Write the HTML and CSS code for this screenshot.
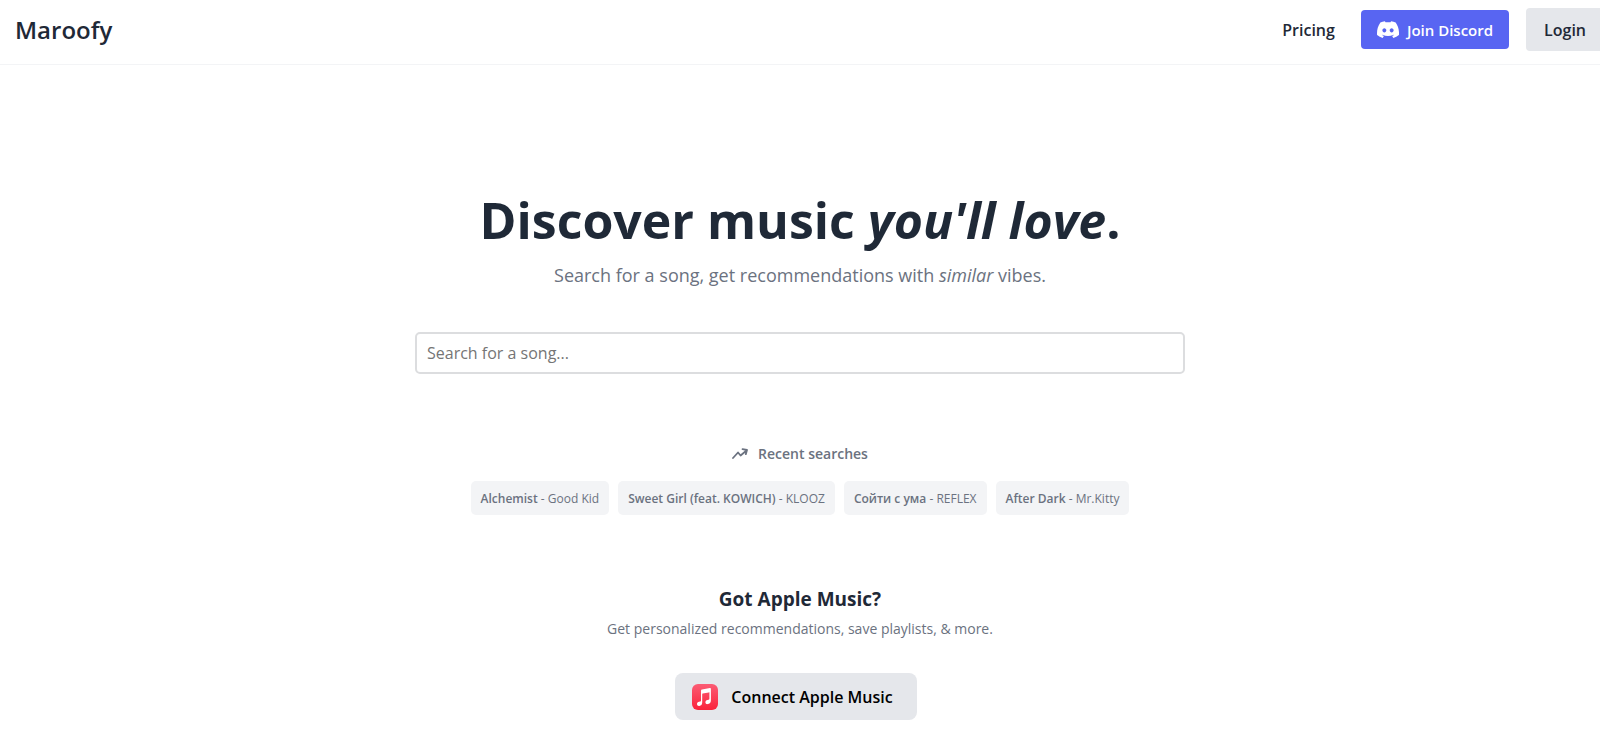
FILE: index.html
```html
<!DOCTYPE html>
<html lang="en">
<head>
  <meta charset="UTF-8" />
  <meta name="viewport" content="width=device-width, initial-scale=1.0" />
  <title>Maroofy</title>
  <link rel="stylesheet" href="styles.css">
</head>
<body>
  <header class="navbar">
    <a href="#" class="logo">Maroofy</a>
    <nav class="nav-links">
      <a href="#" class="pricing">Pricing</a>
      <a href="#" class="discord">
        <svg class="discord-icon" viewBox="0 0 127 96" fill="currentColor" aria-hidden="true">
          <path d="M107.7 8.07A105.15 105.15 0 0 0 81.47 0a72.06 72.06 0 0 0-3.36 6.83 97.68 97.68 0 0 0-29.11 0A72.37 72.37 0 0 0 45.64 0a105.89 105.89 0 0 0-26.25 8.09C2.79 32.65-1.71 56.6.54 80.21a105.73 105.73 0 0 0 32.17 16.15 77.7 77.7 0 0 0 6.89-11.11 68.42 68.42 0 0 1-10.85-5.18c.91-.66 1.8-1.34 2.66-2a75.57 75.57 0 0 0 64.32 0c.87.71 1.76 1.39 2.66 2a68.68 68.68 0 0 1-10.87 5.19 77 77 0 0 0 6.89 11.1 105.25 105.25 0 0 0 32.19-16.14c2.64-27.38-4.51-51.11-18.9-72.15zM42.45 65.69C36.18 65.69 31 60 31 53s5-12.74 11.43-12.74S54 46 53.89 53s-5.05 12.69-11.44 12.69zm42.24 0C78.41 65.69 73.25 60 73.25 53s5-12.74 11.44-12.74S96.23 46 96.12 53s-5.04 12.69-11.43 12.69z"/>
        </svg>
        Join Discord
      </a>
      <button type="button" class="login">Login</button>
    </nav>
  </header>

  <main class="content">
    <h1>Discover music <em>you'll love</em>.</h1>
    <p class="subtitle">Search for a song, get recommendations with <em>similar</em> vibes.</p>

    <input type="search" class="search" placeholder="Search for a song..." aria-label="Search for a song" />

    <section class="recent">
      <h2 class="recent-title">
        <svg class="trend-icon" viewBox="0 0 16 12" fill="none" stroke="currentColor" stroke-width="1.8" stroke-linecap="round" stroke-linejoin="round" aria-hidden="true">
          <path d="M1 10L6 4.5L8.600 7.500L14.500 2.500M10.500 1.200L15 2L13.800 6.200"/>
        </svg>
        Recent searches
      </h2>
      <div class="chips">
        <button type="button" class="chip"><b>Alchemist</b> - Good Kid</button>
        <button type="button" class="chip"><b>Sweet Girl (feat. KOWICH)</b> - KLOOZ</button>
        <button type="button" class="chip"><b>Сойти с ума</b> - REFLEX</button>
        <button type="button" class="chip"><b>After Dark</b> - Mr.Kitty</button>
      </div>
    </section>

    <section class="apple">
      <h2 class="apple-title">Got Apple Music?</h2>
      <p class="apple-text">Get personalized recommendations, save playlists, &amp; more.</p>
      <button type="button" class="connect">
        <svg class="music-icon" viewBox="0 0 26 26" aria-hidden="true">
          <defs>
            <linearGradient id="musicRed" x1="0" y1="0" x2="0" y2="1">
              <stop offset="0" stop-color="#fb5c74"/>
              <stop offset="1" stop-color="#fa233b"/>
            </linearGradient>
          </defs>
          <rect width="26" height="26" rx="6" fill="url(#musicRed)"/>
          <path fill="#fff" d="M18.9 4.7c0-.6-.4-.9-1-.8L10 5.5c-.7.1-1 .5-1 1.2v9.7c0 .7-.3 1-1 1.2l-.9.2c-1.3.3-2.1 1.1-2.1 2.2 0 1.3 1 2.1 2.3 1.9 1.8-.3 2.9-1.5 2.9-3.5V10.3c0-.4.1-.6.5-.7l6.1-1.2c.4-.1.6 0 .6.4v5.9c0 .6-.3 1-.9 1.1l-1 .2c-1.3.3-2.1 1.1-2.1 2.2 0 1.3 1 2.1 2.3 1.9 1.9-.3 3.2-1.5 3.2-3.6z"/>
        </svg>
        Connect Apple Music
      </button>
    </section>
  </main>
</body>
</html>
```

FILE: styles.css
```css
* {
  box-sizing: border-box;
}
body {
  margin: 0;
  font-family: "Segoe UI", "Open Sans", "Noto Sans", sans-serif;
  color: #1f2937;
  background: #fff;
}
h1, h2, p {
  margin: 0;
}
a {
  color: inherit;
  text-decoration: none;
}
button, input {
  font-family: inherit;
  color: inherit;
}
button {
  border: none;
  cursor: pointer;
}

.navbar {
  display: flex;
  align-items: center;
  justify-content: space-between;
  height: 65px;
  padding: 0 0 5px 15px;
  border-bottom: 1px solid #f3f4f6;
}
.logo {
  font-size: 24px;
  font-weight: 600;
}
.nav-links {
  display: flex;
  align-items: center;
  font-size: 16px;
  font-weight: 600;
}
.pricing {
  margin-right: 26px;
}
.discord {
  display: flex;
  align-items: center;
  gap: 8px;
  height: 39px;
  margin-right: 17px;
  padding: 0 16px;
  border-radius: 4px;
  background: #5865f2;
  color: #fff;
  font-size: 15px;
}
.discord-icon {
  width: 22px;
  height: 17px;
}
.login {
  height: 43px;
  padding: 0 14px 0 18px;
  border-radius: 4px 0 0 4px;
  background: #e5e7eb;
  font-size: 16px;
  font-weight: 600;
}

.content {
  display: flex;
  flex-direction: column;
  align-items: center;
  padding: 119px 16px 32px;
  text-align: center;
}
h1 {
  font-size: 50px;
  line-height: 72px;
  font-weight: 700;
}
.subtitle {
  font-size: 18px;
  line-height: 38px;
  color: #6b7280;
}
.search {
  width: 100%;
  max-width: 770px;
  height: 42px;
  margin-top: 38px;
  padding: 0 10px;
  border: 2px solid #dcdddf;
  border-radius: 5px;
  font-size: 16px;
  outline: none;
}
.search::placeholder {
  color: #757575;
}

.recent {
  margin-top: 68px;
  color: #6b7280;
}
.recent-title {
  display: flex;
  align-items: center;
  justify-content: center;
  gap: 10px;
  font-size: 14px;
  line-height: 24px;
  font-weight: 600;
}
.trend-icon {
  width: 16px;
  height: 12px;
}
.chips {
  display: flex;
  flex-wrap: wrap;
  justify-content: center;
  gap: 9px;
  margin-top: 15px;
}
.chip {
  height: 34px;
  padding: 0 10px;
  border-radius: 5px;
  background: #f3f4f6;
  font-size: 12px;
}
.chip b {
  font-weight: 600;
}

.apple {
  margin-top: 68px;
}
.apple-title {
  font-size: 19px;
  line-height: 32px;
  font-weight: 700;
}
.apple-text {
  font-size: 14px;
  line-height: 28px;
  color: #6b7280;
}
.connect {
  display: inline-flex;
  align-items: center;
  gap: 13px;
  height: 47px;
  margin: 30px 8px 0 0;
  padding: 0 24px 0 17px;
  border-radius: 8px;
  background: #e5e7eb;
  color: #000;
  font-size: 16px;
  font-weight: 600;
}
.music-icon {
  width: 26px;
  height: 26px;
}
```
